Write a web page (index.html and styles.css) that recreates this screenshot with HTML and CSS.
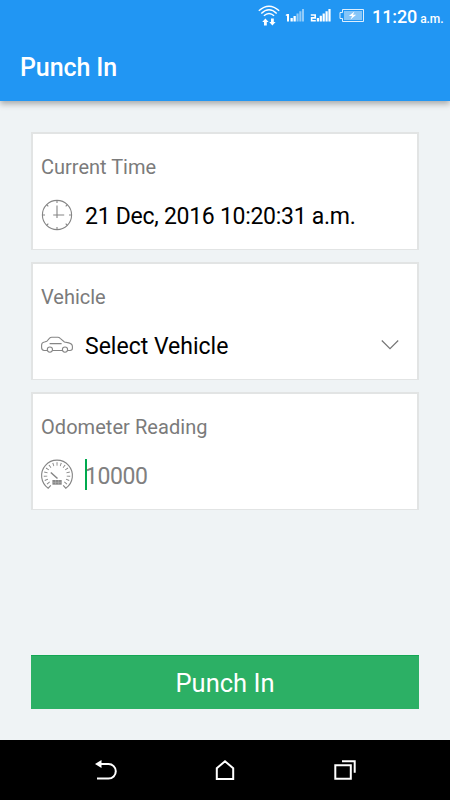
FILE: index.html
```
<!DOCTYPE html>
<html lang="en">
<head>
  <meta charset="UTF-8">
  <title>Punch In</title>
  <meta name="viewport" content="width=device-width, initial-scale=1">
  <link rel="stylesheet" href="styles.css">
</head>
<body>
  <header class="app-header">
    <div class="status-bar">
      <svg class="status-icons" width="110" height="34" viewBox="256 0 110 34">
        <!-- wifi -->
        <g fill="none" stroke="#fff" stroke-width="1.4">
          <path d="M258.8 10.8Q269 1.500 279.2 10.8"/>
          <path d="M261.3 13.4Q269 6.200 276.7 13.4"/>
          <path d="M263.9 15.8Q269 11.200 274.1 15.8"/>
        </g>
        <path fill="#fff" d="M265.400 18.500l3.200 3.500h-1.8v3.500h-2.800v-3.500H262.200zM272.400 25.500l-3.2-3.500h1.8V18.500h2.8v3.500h1.8z"/>
        <!-- sim 1 -->
        <path fill="#fff" d="M287 14h2v7.5h-2v-5.8h-1.2v-1zM290.5 18h2.3v3.5h-2.3zM293.5 16h2.3v5.5h-2.3z"/>
        <path fill="#fff" opacity=".5" d="M296.5 13.5h2.1v8h-2.1zM299.3 11.3h2.1v10.2h-2.1zM302 9h2v12.5h-2z"/>
        <!-- sim 2 -->
        <path fill="none" stroke="#fff" stroke-width="1.6" d="M310.8 15h4.4v2.9h-3.6v2.9h4.2"/>
        <path fill="#fff" d="M316.8 18h2.2v3.5h-2.2zM319.7 15.8h2.2v5.7h-2.2zM322.6 13.5h2.2v8h-2.2zM325.5 11.3h2.2v10.2h-2.2zM328.4 9h2.2v12.5h-2.2z"/>
        <!-- battery -->
        <path fill="none" stroke="#fff" opacity=".85" d="M342.5 9.500h21v12h-21v-3h-2.500v-6h2.500z"/>
        <path fill="#fff" opacity=".45" d="M344 11h18v9h-18z"/>
        <path fill="#fff" d="M354.5 11.500l-5.7 4.500h3.300l-1.600 3.500 5.700-4.800h-3.200z"/>
      </svg>
      <span class="clock">11:20</span>
      <span class="meridiem">a.m.</span>
    </div>
    <h1 class="title">Punch In</h1>
  </header>

  <main class="content">
    <section class="card">
      <div class="label time-label">Current Time</div>
      <div class="field">
        <svg class="icon" width="34" height="34" viewBox="0 0 34 34">
          <circle cx="17" cy="17" r="14.600"/>
          <path d="M17 7.500V20M13.200 17H24.200M17 2.400V5M17 29v2.600M2.400 17H5M29 17h2.600M6.700 6.700l1.600 1.600M25.700 25.700l1.600 1.600M6.700 27.300l1.600-1.600M25.700 8.300l1.600-1.600"/>
        </svg>
        <span class="value time-value">21 Dec, 2016 10:20:31 a.m.</span>
      </div>
    </section>

    <section class="card">
      <div class="label vehicle-label">Vehicle</div>
      <div class="field">
        <svg class="icon car" width="34" height="34" viewBox="0 0 34 34">
          <path d="M7.200 22.500H4.200Q1.600 22.200 1.600 19.500V17Q1.600 14.500 4.500 14L6.800 13.300 9.600 10.200Q10.400 9.300 11.800 9.300H17.800Q19.200 9.300 20.200 10.300L24.400 14 28.800 14.900Q32.400 15.900 32.400 18.500V20.300Q32.400 22.500 30 22.500H27.600M22.400 22.500H12.600M9.600 15.600H21.600"/>
          <circle cx="9.900" cy="21.600" r="2.600"/>
          <circle cx="25" cy="21.600" r="2.600"/>
        </svg>
        <span class="value">Select Vehicle</span>
        <svg class="chevron" width="20" height="12" viewBox="0 0 20 12">
          <path d="M1.800 1.500l8.200 8.200 8.200-8.200"/>
        </svg>
      </div>
    </section>

    <section class="card">
      <div class="label odometer-label">Odometer Reading</div>
      <div class="field">
        <svg class="icon" width="34" height="34" viewBox="0 0 34 34">
          <path d="M10.800 27.300L8.200 30.200A15.400 15.400 0 1 1 25.800 30.200L23.200 27.300"/>
          <path class="ticks" pathLength="270" d="M8.900 25.600A11.500 11.500 0 1 1 25.100 25.600"/>
          <path stroke-width="1.500" d="M10.800 14.500L17.500 20.500"/>
          <path fill="#888" stroke="none" d="M12.400 22h9.300v4.700h-9.300z"/>
          <path stroke="#bbb" stroke-width=".5" d="M15.500 22V26.700M18.600 22V26.700M12.400 24.400h9.300"/>
        </svg>
        <span class="caret"></span>
        <span class="value placeholder">10000</span>
      </div>
    </section>

    <button class="punch-button">Punch In</button>
  </main>

  <nav class="nav-bar">
    <svg width="120" height="60" viewBox="45 740 120 60">
      <path class="nav-line" d="M101 764h7.500a7.300 7.300 0 0 1 0 14.600H97"/>
      <path fill="#fff" d="M95 764l6.500-4v8z"/>
    </svg>
    <svg width="120" height="60" viewBox="165 740 120 60">
      <path class="nav-line" d="M216.800 779V768.200L225 761.300l8.200 6.900V779z"/>
    </svg>
    <svg width="120" height="60" viewBox="285 740 120 60">
      <path class="nav-line" d="M335.300 765.200h15.500v13.500h-15.500zM342 761.300h12.700v11.500"/>
    </svg>
  </nav>
</body>
</html>
```

FILE: styles.css
```
* {
  box-sizing: border-box;
}

body {
  margin: 0;
  height: 800px;
  display: flex;
  flex-direction: column;
  overflow: hidden;
  font-family: Roboto, "Liberation Sans", sans-serif;
  background: #eff3f5;
}

.app-header {
  height: 101px;
  flex: none;
  color: #fff;
  background: #2196f3;
  box-shadow: 0 3px 6px rgba(0, 0, 0, 0.3);
}

.status-bar {
  height: 34px;
  display: flex;
  align-items: baseline;
  padding-left: 256px;
  line-height: 34px;
}

.status-icons {
  flex: none;
  align-self: flex-start;
}

.clock {
  margin-left: 6px;
  font-size: 18px;
  font-weight: 500;
  letter-spacing: -0.1px;
}

.meridiem {
  margin-left: 3px;
  font-size: 12px;
  font-weight: 500;
  letter-spacing: -0.1px;
}

.title {
  margin: 0;
  padding-left: 20px;
  font-size: 25px;
  font-weight: 500;
  letter-spacing: -0.1px;
  line-height: 67px;
}

.content {
  flex: 1;
  display: flex;
  flex-direction: column;
  gap: 12px;
  padding: 31px 31px 31px;
}

.card {
  height: 118px;
  padding: 19px 9px 0 7px;
  background: #fff;
  border: 2px solid #e2e4e4;
  border-bottom-width: 1px;
}

.label {
  padding-left: 1px;
  height: 28px;
  font-size: 20px;
  line-height: 28px;
  color: #7b7b7b;
}

.odometer-label {
  letter-spacing: 0.05px;
}

.field {
  height: 34px;
  margin-top: 17px;
  display: flex;
  align-items: center;
  position: relative;
}

.icon {
  flex: none;
  margin-right: 11px;
  fill: none;
  stroke: #858585;
  stroke-width: 1.1;
}

.ticks {
  stroke-width: 3.5;
  stroke-dasharray: 4.5 14.2;
  stroke-dashoffset: -2;
}

.value {
  padding-top: 3px;
  font-size: 23px;
  line-height: 34px;
  color: #000;
  white-space: nowrap;
}

.time-value {
  letter-spacing: -0.28px;
}

.placeholder {
  letter-spacing: -0.4px;
  color: #808080;
}

.caret {
  position: absolute;
  left: 45px;
  top: 1px;
  width: 2px;
  height: 31px;
  background: #00aa4f;
}

.chevron {
  margin-left: auto;
  margin-right: 8px;
  fill: none;
  stroke: #757575;
  stroke-width: 1.2;
}

.punch-button {
  height: 54px;
  margin-top: auto;
  padding: 1px 0 0;
  border: 0;
  border-top: 1px solid #13a653;
  background: #2cb065;
  color: #fff;
  font: 25.5px/52px Roboto, "Liberation Sans", sans-serif;
}

.nav-bar {
  height: 60px;
  flex: none;
  display: flex;
  justify-content: center;
  background: #000;
}

.nav-line {
  fill: none;
  stroke: #fff;
  stroke-width: 2;
}
```
